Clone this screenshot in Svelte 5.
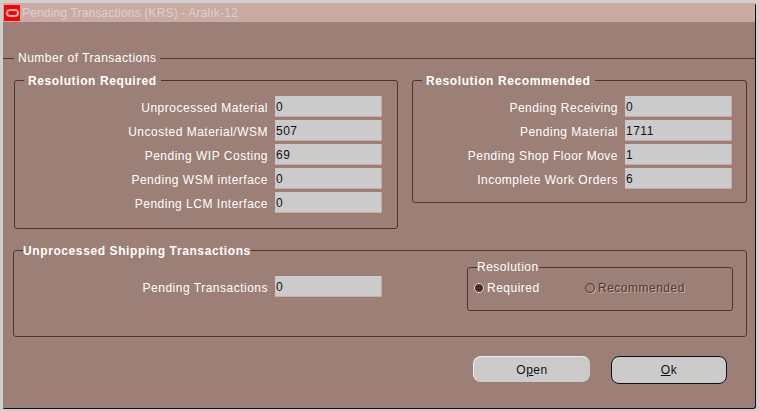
<script lang="ts">
  const required = [
    { label: 'Unprocessed Material', value: '0' },
    { label: 'Uncosted Material/WSM', value: '507' },
    { label: 'Pending WIP Costing', value: '69' },
    { label: 'Pending WSM interface', value: '0' },
    { label: 'Pending LCM Interface', value: '0' }
  ];
  const recommended = [
    { label: 'Pending Receiving', value: '0' },
    { label: 'Pending Material', value: '1711' },
    { label: 'Pending Shop Floor Move', value: '1' },
    { label: 'Incomplete Work Orders', value: '6' }
  ];
</script>

<div class="screen">
  <section class="window">
    <header class="titlebar">
      <span class="logo"><span class="ring"></span></span>
      <span class="title">Pending Transactions (KRS) - Aralık-12</span>
    </header>

    <div class="body">
      <div class="rule"><span>Number of Transactions</span></div>

      <div class="top">
        <fieldset class="group left">
          <legend>Resolution Required</legend>
          {#each required as r}
            <div class="row">
              <span class="label">{r.label}</span>
              <span class="field">{r.value}</span>
            </div>
          {/each}
        </fieldset>

        <fieldset class="group right">
          <legend>Resolution Recommended</legend>
          {#each recommended as r}
            <div class="row">
              <span class="label">{r.label}</span>
              <span class="field">{r.value}</span>
            </div>
          {/each}
        </fieldset>
      </div>

      <fieldset class="group shipping">
        <legend>Unprocessed Shipping Transactions</legend>
        <div class="row pending">
          <span class="label">Pending Transactions</span>
          <span class="field">0</span>
        </div>
        <fieldset class="resolution">
          <legend>Resolution</legend>
          <div class="radios">
            <span class="radio on"><i></i>Required</span>
            <span class="radio off"><i></i>Recommended</span>
          </div>
        </fieldset>
      </fieldset>

      <div class="actions">
        <button type="button" class="btn">O<u>p</u>en</button>
        <button type="button" class="btn default"><u>O</u>k</button>
      </div>
    </div>
  </section>
</div>

<style>
  :global(body) {
    margin: 0;
    background: #cfcfcf;
  }
  .screen {
    width: 759px;
    height: 411px;
    padding: 3px 0 0 2px;
    box-sizing: border-box;
    overflow: hidden;
    font-family: 'Liberation Sans', Arial, sans-serif;
    font-size: 12px;
    letter-spacing: 0.5px;
    color: #fff;
  }
  .window {
    width: 754px;
    height: 406px;
    box-sizing: border-box;
    background: #9c7f76;
    border-left: 1px solid #d4d0ce;
    border-right: 1px solid #111;
    border-bottom: 1px solid #111;
    border-radius: 0 3px 3px 3px;
  }
  .titlebar {
    display: flex;
    align-items: center;
    height: 19px;
    background: #c9aba4;
    color: #ddd0cc;
  }
  .logo {
    display: flex;
    align-items: center;
    justify-content: center;
    width: 16px;
    height: 16px;
    margin-left: 1px;
    background: #f00;
  }
  .ring {
    width: 13px;
    height: 8px;
    box-sizing: border-box;
    border: 2px solid #ffb4b4;
    border-radius: 4px;
  }
  .title {
    margin-left: 2px;
    letter-spacing: 0.17px;
  }

  .body {
    padding: 28px 5px 0 9px;
  }
  .rule {
    display: flex;
    align-items: center;
    height: 16px;
    margin-left: -9px;
    margin-right: -5px;
  }
  .rule::before,
  .rule::after {
    content: '';
    height: 1px;
    background: #55322b;
  }
  .rule::before {
    width: 11px;
  }
  .rule::after {
    flex: 1;
  }
  .rule span {
    padding: 0 4px 0 4px;
  }

  .top {
    display: flex;
    align-items: flex-start;
    gap: 14px;
    margin-top: 5px;
    padding-left: 2px;
  }
  fieldset {
    margin: 0;
    min-width: 0;
    box-sizing: border-box;
    border: 1px solid #55322b;
    border-radius: 3px;
  }
  .group > legend {
    font-weight: 700;
    letter-spacing: 0.6px;
    padding: 2px 4px 0;
    line-height: 16px;
    margin-left: 9px;
  }
  .group.left {
    width: 384px;
    height: 158px;
    padding: 7px 15px 0 0;
  }
  .group.right {
    width: 335px;
    height: 132px;
    padding: 7px 14px 0 0;
  }
  .row {
    display: flex;
    justify-content: flex-end;
    align-items: center;
    gap: 7px;
    height: 21px;
    margin-bottom: 3px;
  }
  .label {
    padding-top: 2px;
  }
  .field {
    width: 107px;
    height: 21px;
    box-sizing: border-box;
    padding: 1px 1px 0;
    line-height: 20px;
    color: #111;
    background: #cbcbcb;
    border-right: 1px solid #c9aba4;
    border-bottom: 1px solid #c9aba4;
  }

  .group.shipping {
    position: relative;
    width: 734px;
    height: 96px;
    margin-top: 12px;
    margin-left: 1px;
    padding: 17px 0 0 0;
  }
  .group.shipping > legend {
    margin-left: 9px;
    padding: 2px 0 0;
  }
  .pending {
    width: 368px;
  }
  .resolution {
    position: absolute;
    left: 453px;
    top: 1px;
    width: 266px;
    height: 51px;
    padding: 7px 6px 0;
  }
  .resolution legend {
    padding: 0;
    margin-left: 3px;
    line-height: 14px;
  }
  .radios {
    display: flex;
    line-height: 14px;
  }
  .radio {
    display: flex;
    align-items: center;
    width: 111px;
  }
  .radio i {
    width: 10px;
    height: 10px;
    box-sizing: border-box;
    border-radius: 50%;
    margin-right: 3px;
  }
  .radio.on i {
    background: #4a2a25;
    border: 1px solid #e4dcd9;
  }
  .radio.off {
    color: #4e3a35;
    text-shadow: 1px 1px 0 #c9aba4;
  }
  .radio.off i {
    border: 1px solid #55322b;
    box-shadow: 1px 1px 0 #c9aba4;
  }

  .actions {
    display: flex;
    justify-content: flex-end;
    align-items: flex-start;
    gap: 21px;
    margin-top: 19px;
    padding-right: 23px;
  }
  .btn {
    width: 117px;
    height: 26px;
    padding: 0;
    font: inherit;
    letter-spacing: 0.5px;
    color: #111;
    background: #cbcbcb;
    border: none;
    border-radius: 8px;
    border-top: 1px solid #f2efee;
    border-left: 1px solid #f2efee;
  }
  .btn.default {
    width: 116px;
    height: 28px;
    border: 1px solid #111;
  }
</style>
